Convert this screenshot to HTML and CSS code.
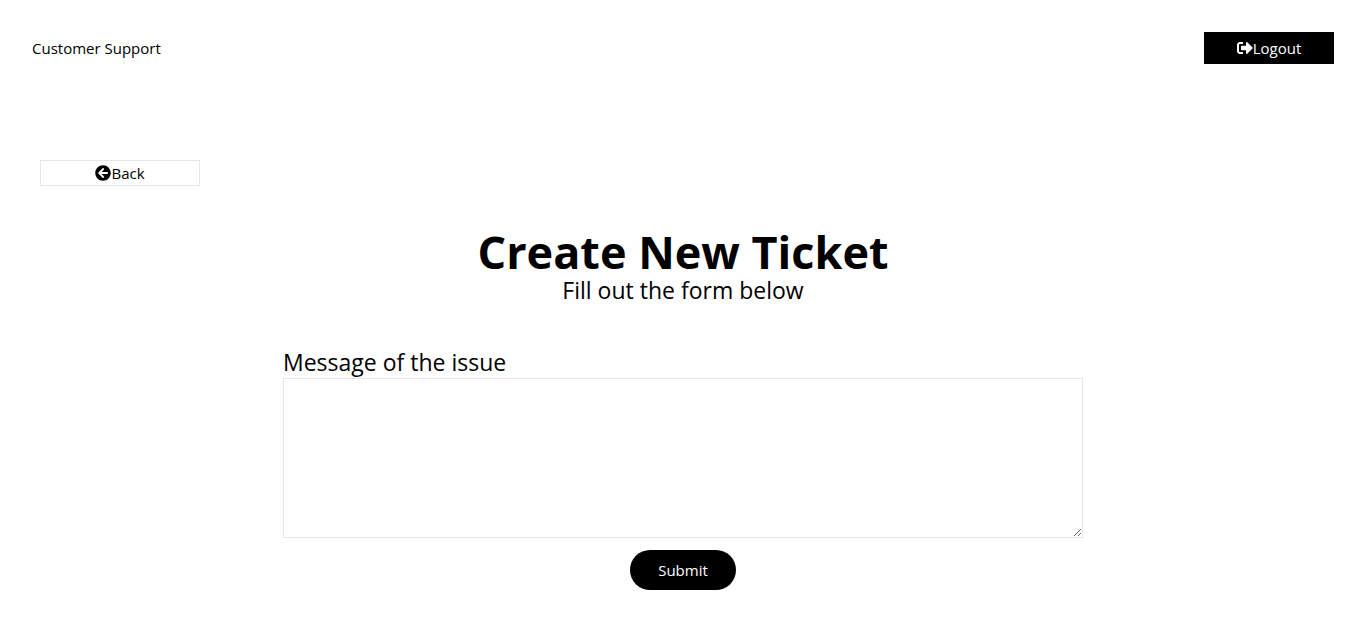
FILE: index.html
```html
<!DOCTYPE html>
<html lang="en">
<head>
<meta charset="utf-8">
<title>Customer Support</title>
<link rel="stylesheet" href="styles.css">
</head>
<body>
<header class="header">
  <a class="brand" href="/">Customer Support</a>
  <button class="logout" type="button"><svg class="icon" viewBox="0 0 512 512" aria-hidden="true"><path d="M497 273L329 441c-15 15-41 4.500-41-17v-96H152c-13.300 0-24-10.700-24-24v-96c0-13.300 10.700-24 24-24h136V88c0-21.400 25.900-32 41-17l168 168c9.300 9.400 9.300 24.600 0 34zM192 436v-40c0-6.600-5.400-12-12-12H96c-17.700 0-32-14.300-32-32V160c0-17.700 14.300-32 32-32h84c6.600 0 12-5.400 12-12V76c0-6.600-5.400-12-12-12H96c-53 0-96 43-96 96v192c0 53 43 96 96 96h84c6.600 0 12-5.400 12-12z"/></svg>Logout</button>
</header>
<main class="main">
  <a class="back" href="/"><svg class="icon" viewBox="0 0 512 512" aria-hidden="true"><path d="M256 504C119 504 8 393 8 256S119 8 256 8s248 111 248 248-111 248-248 248zm28.900-143.600L209.400 288H392c13.300 0 24-10.700 24-24v-16c0-13.300-10.700-24-24-24H209.400l75.500-72.400c9.700-9.300 9.900-24.800.4-34.300l-11-10.900c-9.400-9.400-24.600-9.400-33.900 0L107.700 239c-9.400 9.400-9.400 24.600 0 33.900l132.700 132.700c9.400 9.400 24.600 9.400 33.900 0l11-10.900c9.500-9.500 9.300-25-.4-34.300z"/></svg>Back</a>
  <section class="intro">
    <h1 class="title">Create New Ticket</h1>
    <p class="subtitle">Fill out the form below</p>
  </section>
  <form class="form">
    <label class="label" for="message">Message of the issue</label>
    <textarea class="message" id="message" name="message"></textarea>
    <button class="submit" type="submit">Submit</button>
  </form>
</main>
</body>
</html>
```
FILE: styles.css
```css
* {
  box-sizing: border-box;
  margin: 0;
  padding: 0;
}

body {
  background: #fff;
  color: #000;
  font-family: "Segoe UI", "Open Sans", sans-serif;
  font-size: 15px;
  line-height: 24px;
}

.header {
  display: flex;
  align-items: center;
  justify-content: space-between;
  padding: 32px;
}

.brand,
.back {
  color: inherit;
  text-decoration: none;
}

.icon {
  width: 16px;
  height: 16px;
  fill: currentColor;
}

.logout {
  display: flex;
  align-items: center;
  justify-content: center;
  width: 130px;
  height: 32px;
  border: 0;
  background: #000;
  color: #fff;
  font: inherit;
}

.main {
  padding: 64px 40px 28px;
}

.back {
  display: flex;
  align-items: center;
  justify-content: center;
  width: 160px;
  border: 1px solid #e5e7eb;
}

.intro {
  margin-top: 42px;
  text-align: center;
}

.title {
  font-size: 45px;
  line-height: 48px;
}

.subtitle,
.label {
  font-size: 23px;
  line-height: 28px;
}

.form {
  display: flex;
  flex-direction: column;
  max-width: 800px;
  margin: 44px auto 0;
}

.label {
  padding-bottom: 2px;
}

.message {
  width: 100%;
  height: 160px;
  border: 1px solid #e5e7eb;
  resize: vertical;
  font: inherit;
}

.submit {
  align-self: center;
  height: 40px;
  margin-top: 12px;
  padding: 0 28px;
  border: 0;
  border-radius: 20px;
  background: #000;
  color: #fff;
  font: inherit;
}
```
